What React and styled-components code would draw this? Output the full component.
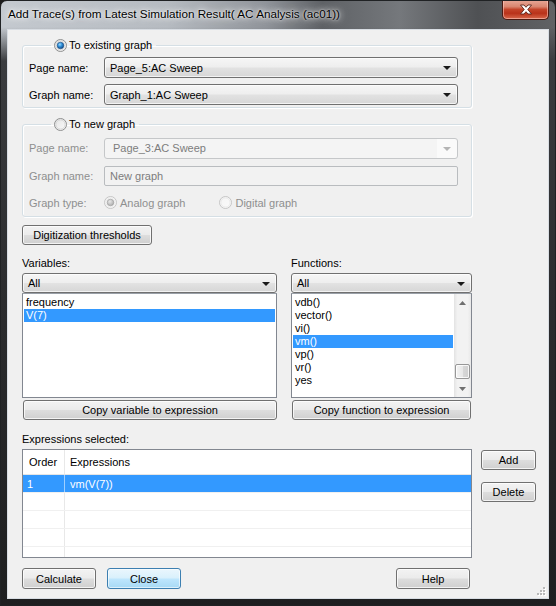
import React from 'react';
import styled, { createGlobalStyle, css } from 'styled-components';

const Global = createGlobalStyle`
  html, body { margin: 0; padding: 0; background: #1c1c1c; }
  body {
    width: 556px; height: 606px; overflow: hidden;
    font-family: "Liberation Sans", Arial, sans-serif; font-size: 11px; color: #000;
  }
  * { box-sizing: border-box; }
`;

const FONT = `"Liberation Sans", Arial, sans-serif`;

const Window = styled.div`
  width: 556px; height: 606px;
  display: flex; flex-direction: column;
  border-radius: 7px 7px 0 0;
  border: 1px solid #202224;
  background:
    linear-gradient(to bottom, rgba(0,0,0,0) 0px, rgba(0,0,0,0) 26px, #3a3c3f 60px, #2b2c2e 300px, #1e1f20 100%),
    linear-gradient(to right, #c4c9cf 0%, #b6bbc1 30%, #8f9399 48%, #5e6165 58%, #75787c 72%, #4f5154 86%, #606265 100%);
  overflow: hidden;
`;

const TitleBar = styled.div`
  height: 28px; flex: none;
  display: flex; align-items: flex-start; justify-content: space-between;
  padding: 0 6px 0 7px;
`;

const Title = styled.div`
  font-family: ${FONT};
  font-size: 11.7px;
  line-height: 12px;
  margin-top: 7px;
  color: #000;
  white-space: nowrap;
  text-shadow: 0 0 6px rgba(255,255,255,0.95), 0 0 10px rgba(255,255,255,0.8), 0 0 2px rgba(255,255,255,0.9);
`;

const CloseBtn = styled.div`
  width: 47px; height: 20px;
  margin-top: -1px;
  border: 1px solid #4b1a12;
  border-top: none;
  border-radius: 0 0 5px 5px;
  background: linear-gradient(to bottom, #e8a898 0%, #d98670 35%, #c4442a 50%, #b9321a 70%, #d8684c 100%);
  box-shadow: inset 0 0 0 1px rgba(255,210,200,0.55);
  display: flex; align-items: center; justify-content: center;
`;

const Client = styled.div`
  flex: 1;
  margin: 0 6px 6px 6px;
  border: 1px solid #d8dde3;
  background: #f0f0f0;
  padding: 9px 0 0 14px;
  display: flex; flex-direction: column;
  position: relative;
`;

const Group = styled.fieldset`
  margin: 0;
  width: 450px;
  border: 1px solid #d5dfe5;
  border-radius: 3px;
  padding: ${p => p.$pad || '5px 13px 2px 6px'};
  display: flex; flex-direction: column;
  gap: ${p => p.$gap || '6px'};
  box-shadow: inset 1px 1px 0 #ffffff, 1px 1px 0 #ffffff;
`;

const Legend = styled.legend`
  margin-left: 22px;
  padding: 0 4px 0 3px;
  display: flex; align-items: center; gap: 2px;
  font-size: 11px; line-height: 13px;
  height: 13px;
`;

const Row = styled.div`
  display: flex; align-items: center;
  height: ${p => p.$h || 21}px;
`;

const Label = styled.span`
  width: ${p => p.$w || 75}px;
  flex: none;
  color: ${p => (p.$disabled ? '#8e8f8f' : '#000')};
  white-space: nowrap;
`;

const comboBase = css`
  height: 21px;
  display: flex; align-items: center; justify-content: space-between;
  border-radius: 3px;
  padding: 0 6px 0 5px;
  white-space: nowrap;
`;

const Combo = styled.div`
  ${comboBase};
  flex: ${p => (p.$full ? 'none' : 1)};
  width: ${p => (p.$full ? '100%' : 'auto')};
  height: ${p => p.$h || 21}px;
  border: 1px solid #707070;
  background: linear-gradient(to bottom, #f6f6f6 0%, #eeeeee 48%, #e2e2e2 52%, #d6d6d6 100%);
  box-shadow: inset 0 0 0 1px rgba(255,255,255,0.7);
  color: #000;
`;

const ComboDisabled = styled.div`
  ${comboBase};
  flex: 1;
  border: 1px solid #c5c7c9;
  background: linear-gradient(to right, #f4f4f4 0, #f4f4f4 calc(100% - 20px), #fafafa calc(100% - 20px));
  color: #7d7d7d;
  padding-left: 8px;
`;

const Arrow = styled.span`
  width: 0; height: 0;
  border-left: 4px solid transparent;
  border-right: 4px solid transparent;
  border-top: 4px solid ${p => (p.$disabled ? '#b4b4b4' : '#1a1a1a')};
  margin-top: 1px;
`;

const TextField = styled.div`
  flex: 1;
  height: 20px;
  border: 1px solid #b9bcbf;
  border-radius: 2px;
  background: #f2f2f2;
  color: #7d7d7d;
  display: flex; align-items: center;
  padding-left: 5px;
`;

const RadioOpt = styled.span`
  display: inline-flex; align-items: center; gap: 1px;
  color: ${p => (p.$disabled ? '#8e8f8f' : '#000')};
  margin-right: ${p => p.$mr || 0}px;
`;

const Button = styled.button`
  font-family: ${FONT}; font-size: 11px; color: #000;
  height: ${p => p.$h || 20}px;
  width: ${p => (p.$w ? `${p.$w}px` : '100%')};
  padding: 0;
  border-radius: 3px;
  border: 1px solid ${p => (p.$focus ? '#3c7fb1' : '#707070')};
  background: ${p =>
    p.$focus
      ? 'linear-gradient(to bottom, #eaf6fd 0%, #d9f0fc 48%, #bee6fd 52%, #a7d9f5 100%)'
      : 'linear-gradient(to bottom, #f3f3f3 0%, #ebebeb 48%, #dddddd 52%, #cfcfcf 100%)'};
  box-shadow: inset 0 0 0 1px ${p => (p.$focus ? 'rgba(255,255,255,0.6)' : 'rgba(255,255,255,0.75)')};
  flex: none;
`;

const ThreshWrap = styled.div`
  margin-top: 8px;
  display: flex;
`;

const Lists = styled.div`
  margin-top: 12px;
  width: 450px;
  display: grid;
  grid-template-columns: 255px 181px;
  column-gap: 14px;
`;

const Col = styled.div`
  display: flex; flex-direction: column;
`;

const SmallLabel = styled.div`
  height: 13px; line-height: 13px;
  margin-bottom: 3px;
  padding-left: ${p => p.$pl || 0}px;
`;

const ListBox = styled.div`
  height: 105px;
  border: 1px solid #828790;
  border-top-color: #9aa0a8;
  background: #fff;
  display: flex;
`;

const Items = styled.div`
  flex: 1;
  padding: 2px 1px 0 1px;
  display: flex; flex-direction: column;
`;

const Item = styled.div`
  height: 13px; line-height: 13px;
  padding-left: 2px;
  white-space: nowrap;
  background: ${p => (p.$sel ? '#3399ff' : 'transparent')};
  color: ${p => (p.$sel ? '#fff' : '#000')};
`;

const ScrollBar = styled.div`
  width: 17px; flex: none;
  display: flex; flex-direction: column;
  background: linear-gradient(to right, #e3e3e3 0%, #f2f2f2 20%, #f2f2f2 80%, #e8e8e8 100%);
`;

const ScrollArrow = styled.div`
  height: 17px; flex: none;
  display: flex; align-items: center; justify-content: center;
`;

const Track = styled.div`
  flex: 1;
  display: flex; flex-direction: column; justify-content: flex-end;
  align-items: center;
  padding-bottom: 1px;
`;

const Thumb = styled.div`
  width: 15px; height: 15px;
  border: 1px solid #979797;
  border-radius: 2px;
  background: linear-gradient(to right, #f3f3f3 0%, #e8e8e8 50%, #d8d8d8 51%, #d0d0d0 100%);
  box-shadow: inset 0 0 0 1px rgba(255,255,255,0.8);
`;

const CopyBtnWrap = styled.div`
  margin-top: 2px;
  padding: 0 ${p => p.$pr || 0}px 0 1px;
`;

const ExprLabel = styled.div`
  margin-top: 13px;
  height: 13px; line-height: 13px;
`;

const ExprArea = styled.div`
  margin-top: 3px;
  display: flex; align-items: flex-start;
  gap: 9px;
`;

const Table = styled.div`
  width: 450px; height: 109px;
  border: 1px solid #828790;
  background: #fff;
  display: flex; flex-direction: column;
  overflow: hidden;
`;

const TRow = styled.div`
  display: grid;
  grid-template-columns: 42px 1fr;
  height: ${p => p.$h || 18}px;
  flex: none;
  background: ${p => (p.$sel ? '#3399ff' : '#fff')};
  color: ${p => (p.$sel ? '#fff' : '#000')};
  border-bottom: 1px solid ${p => (p.$head ? '#e5e5e5' : '#f0f0f0')};
`;

const Cell = styled.div`
  display: flex; align-items: center;
  padding-left: ${p => p.$pl || 5}px;
  border-right: ${p => (p.$div ? `1px solid ${p.$sel ? '#9fcfff' : '#e8e8e8'}` : 'none')};
  white-space: nowrap;
`;

const SideButtons = styled.div`
  display: flex; flex-direction: column;
  gap: 12px;
  padding-top: 1px;
`;

const Footer = styled.div`
  margin-top: 10px;
  width: 448px;
  display: flex; align-items: center;
  gap: 11px;
`;

const Spacer = styled.div`
  flex: 1;
`;

const Grip = styled.div`
  position: absolute; right: 2px; bottom: 2px;
  width: 11px; height: 11px;
`;

function Radio({ checked, disabled }) {
  const ring = disabled ? '#c5c5c5' : '#8e8f8f';
  return (
    <svg width="13" height="13" viewBox="0 0 13 13" style={{ flex: 'none' }}>
      <defs>
        <linearGradient id={`rb${disabled ? 'd' : 'e'}`} x1="0" y1="0" x2="1" y2="1">
          <stop offset="0" stopColor={disabled ? '#f4f4f4' : '#e4e4e4'} />
          <stop offset="1" stopColor={disabled ? '#fbfbfb' : '#fafafa'} />
        </linearGradient>
        <radialGradient id="dotE" cx="0.4" cy="0.35" r="0.7">
          <stop offset="0" stopColor="#9fdcff" />
          <stop offset="0.45" stopColor="#2f8fd8" />
          <stop offset="1" stopColor="#10407a" />
        </radialGradient>
        <radialGradient id="dotD" cx="0.4" cy="0.35" r="0.7">
          <stop offset="0" stopColor="#e8e8e8" />
          <stop offset="1" stopColor="#a9a9a9" />
        </radialGradient>
      </defs>
      <circle cx="6.5" cy="6.5" r="6" fill={`url(#rb${disabled ? 'd' : 'e'})`} stroke={ring} strokeWidth="1" />
      <circle cx="6.5" cy="6.5" r="4.6" fill="none" stroke={disabled ? '#e6e6e6' : '#d2d2d2'} strokeWidth="0.8" />
      {checked && (
        <circle cx="6.5" cy="6.5" r="3.3" fill={disabled ? 'url(#dotD)' : 'url(#dotE)'} stroke={disabled ? '#9a9a9a' : '#1c4f83'} strokeWidth="0.6" />
      )}
    </svg>
  );
}

function ArrowGlyph({ up }) {
  return (
    <svg width="7" height="4" viewBox="0 0 7 4">
      <path d={up ? 'M0 4 L3.5 0 L7 4 Z' : 'M0 0 L7 0 L3.5 4 Z'} fill="#6f6f6f" />
    </svg>
  );
}

const variables = ['frequency', 'V(7)'];
const functions = ['vdb()', 'vector()', 'vi()', 'vm()', 'vp()', 'vr()', 'yes'];

export default function App() {
  return (
    <>
      <Global />
      <Window>
        <TitleBar>
          <Title>Add Trace(s) from Latest Simulation Result( AC Analysis (ac01))</Title>
          <CloseBtn>
            <svg width="14" height="11" viewBox="0 0 14 11">
              <path d="M1.5 1 L5 1 L7 3.3 L9 1 L12.5 1 L8.8 5.5 L12.5 10 L9 10 L7 7.7 L5 10 L1.5 10 L5.2 5.5 Z"
                fill="#ffffff" stroke="#5a2218" strokeWidth="0.9" strokeLinejoin="round" />
            </svg>
          </CloseBtn>
        </TitleBar>
        <Client>
          <Group>
            <Legend>
              <Radio checked />
              <span>To existing graph</span>
            </Legend>
            <Row>
              <Label>Page name:</Label>
              <Combo>
                <span>Page_5:AC Sweep</span>
                <Arrow />
              </Combo>
            </Row>
            <Row>
              <Label>Graph name:</Label>
              <Combo>
                <span>Graph_1:AC Sweep</span>
                <Arrow />
              </Combo>
            </Row>
          </Group>

          <Group style={{ marginTop: 10 }} $pad="7px 13px 5px 6px" $gap="8px">
            <Legend>
              <Radio />
              <span>To new graph</span>
            </Legend>
            <Row $h={20}>
              <Label $disabled>Page name:</Label>
              <ComboDisabled>
                <span>Page_3:AC Sweep</span>
                <Arrow $disabled />
              </ComboDisabled>
            </Row>
            <Row $h={20}>
              <Label $disabled>Graph name:</Label>
              <TextField>New graph</TextField>
            </Row>
            <Row $h={17}>
              <Label $disabled>Graph type:</Label>
              <RadioOpt $disabled $mr={34}>
                <Radio checked disabled />
                <span style={{ marginLeft: 2 }}>Analog graph</span>
              </RadioOpt>
              <RadioOpt $disabled>
                <Radio disabled />
                <span style={{ marginLeft: 2 }}>Digital graph</span>
              </RadioOpt>
            </Row>
          </Group>

          <ThreshWrap>
            <Button $w={130}>Digitization thresholds</Button>
          </ThreshWrap>

          <Lists>
            <Col>
              <SmallLabel>Variables:</SmallLabel>
              <Combo $full $h={20}>
                <span>All</span>
                <Arrow />
              </Combo>
              <ListBox>
                <Items>
                  {variables.map((v, i) => (
                    <Item key={v} $sel={i === 1}>{v}</Item>
                  ))}
                </Items>
              </ListBox>
              <CopyBtnWrap>
                <Button>Copy variable to expression</Button>
              </CopyBtnWrap>
            </Col>
            <Col>
              <SmallLabel>Functions:</SmallLabel>
              <Combo $full $h={20}>
                <span>All</span>
                <Arrow />
              </Combo>
              <ListBox>
                <Items>
                  {functions.map(f => (
                    <Item key={f} $sel={f === 'vm()'}>{f}</Item>
                  ))}
                </Items>
                <ScrollBar>
                  <ScrollArrow><ArrowGlyph up /></ScrollArrow>
                  <Track><Thumb /></Track>
                  <ScrollArrow><ArrowGlyph /></ScrollArrow>
                </ScrollBar>
              </ListBox>
              <CopyBtnWrap $pr={1}>
                <Button>Copy function to expression</Button>
              </CopyBtnWrap>
            </Col>
          </Lists>

          <ExprLabel>Expressions selected:</ExprLabel>
          <ExprArea>
            <Table>
              <TRow $head $h={25}>
                <Cell $div $pl={6}>Order</Cell>
                <Cell>Expressions</Cell>
              </TRow>
              <TRow $sel>
                <Cell $div $sel $pl={4}>1</Cell>
                <Cell>vm(V(7))</Cell>
              </TRow>
              {[0, 1, 2, 3].map(i => (
                <TRow key={i}>
                  <Cell $div />
                  <Cell />
                </TRow>
              ))}
            </Table>
            <SideButtons>
              <Button $w={55}>Add</Button>
              <Button $w={55}>Delete</Button>
            </SideButtons>
          </ExprArea>

          <Footer>
            <Button $w={74} $h={21}>Calculate</Button>
            <Button $w={74} $h={21} $focus>Close</Button>
            <Spacer />
            <Button $w={74} $h={21}>Help</Button>
          </Footer>

          <Grip>
            <svg width="11" height="11" viewBox="0 0 11 11">
              {[[8, 2], [8, 5], [5, 5], [8, 8], [5, 8], [2, 8]].map(([x, y], i) => (
                <g key={i}>
                  <rect x={x + 1} y={y + 1} width="2" height="2" fill="#ffffff" />
                  <rect x={x} y={y} width="2" height="2" fill="#b8b8b8" />
                </g>
              ))}
            </svg>
          </Grip>
        </Client>
      </Window>
    </>
  );
}
